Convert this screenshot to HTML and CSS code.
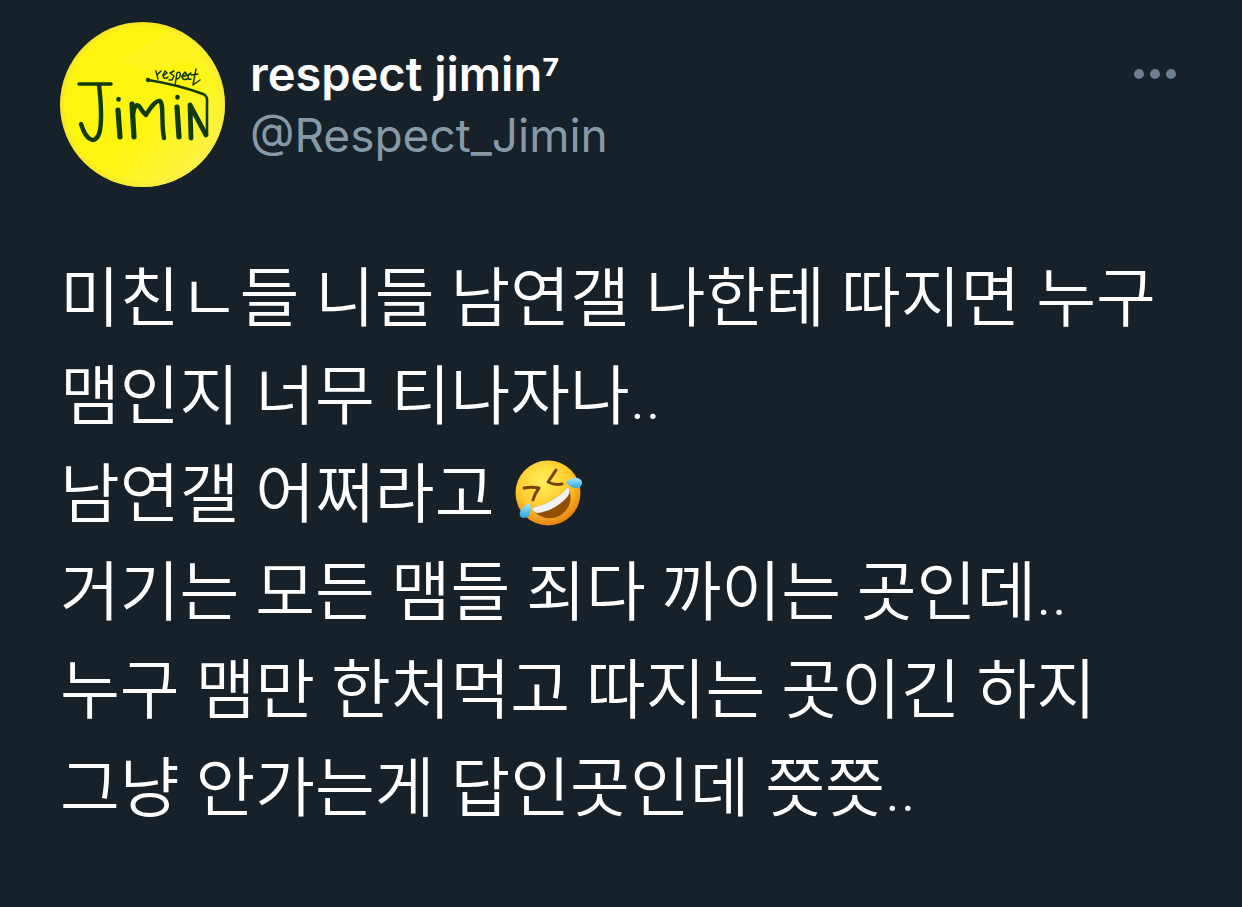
FILE: index.html
```html
<!DOCTYPE html>
<html lang="ko">
<head>
    <meta charset="UTF-8">
    <meta name="viewport" content="width=device-width, initial-scale=1.0">
    <title>respect jimin⁷</title>
    <link rel="stylesheet" href="styles.css">
</head>
<body>
    <article class="tweet">
        <header class="tweet-header">
            <svg class="avatar" viewBox="0 0 165 165" role="img" aria-label="respect jimin">
                <defs>
                    <clipPath id="avatarClip"><circle cx="82.5" cy="82.5" r="82.5"/></clipPath>
                    <radialGradient id="avatarFill" cx="50%" cy="50%" r="50%">
                        <stop offset="0.92" stop-color="#fef50f"/>
                        <stop offset="1" stop-color="#f3e52a"/>
                    </radialGradient>
                    <linearGradient id="avatarShade" x1="0" y1="0" x2="1" y2="1">
                        <stop offset="0.55" stop-color="#fbf250" stop-opacity="0"/>
                        <stop offset="0.85" stop-color="#fbf250" stop-opacity="0.8"/>
                    </linearGradient>
                </defs>
                <g clip-path="url(#avatarClip)">
                    <rect width="165" height="165" fill="url(#avatarFill)"/>
                    <rect width="165" height="165" fill="url(#avatarShade)"/>
                    <path d="M60 40L110 8L150 20L165 60L125 40L90 48Z" fill="#fbf250" opacity="0.25"/>
                </g>
                <g fill="none" stroke="#123b0c" stroke-linecap="round" stroke-linejoin="round">
                    <path d="M19 62L51 62" stroke-width="3.5"/>
                    <path d="M39 63C41 80 42 96 40 108C37 123 27 121 21 102" stroke-width="4.4"/>
                    <path d="M58 88L60 115" stroke-width="5.2"/>
                    <path d="M58.5 77V77.5" stroke-width="4.6"/>
                    <path d="M72 82L74 115" stroke-width="5.2"/>
                    <path d="M73 92C74 86 76 81 79 84C81 87 84 92 86 93C90 86 96 78 100 79C104 82 101 102 104 116" stroke-width="4.4"/>
                    <path d="M117 85L119 115" stroke-width="5.2"/>
                    <path d="M117.5 75V75.5" stroke-width="4.6"/>
                    <path d="M131 116L130 83L146 113" stroke-width="4.8"/>
                    <path d="M88 58C107 61 127 66 143 72C148 74 147 78 147 84L147 113" stroke-width="2.6"/>
                    <circle cx="88" cy="58" r="1.4" stroke-width="1.6"/>
                    <path d="M96 49L98 57M97 53L101 49M103 54L107 51L105 49L103 53C103 57 106 57 108 55M114 49L110 51L114 54L112 58L109 58M117 51L115 63M117 51C121 48 122 55 117 57M122 55L127 53L125 50L122 54C122 58 125 58 127 57M131 51C127 52 127 59 131 57M136 47L133 63L140 58M131 53L138 52" stroke-width="1.5"/>
                </g>
            </svg>
            <div class="author">
                <h1 class="name">respect jimin<span class="power">⁷</span></h1>
                <a class="handle" href="#">@Respect_Jimin</a>
            </div>
            <button class="more" type="button" aria-label="더 보기">
                <span class="dot"></span>
                <span class="dot"></span>
                <span class="dot"></span>
            </button>
        </header>

        <p class="tweet-text">
            미친ㄴ들 니들 남연갤 나한테 따지면 누구 맴인지 너무 티나자나..<br>
            남연갤 어쩌라고
            <svg class="emoji" viewBox="0 0 68 68" role="img" aria-label="🤣">
                <defs>
                    <radialGradient id="face" cx="42%" cy="32%" r="68%">
                        <stop offset="0" stop-color="#fff05a"/>
                        <stop offset="0.6" stop-color="#fdca2b"/>
                        <stop offset="1" stop-color="#e98414"/>
                    </radialGradient>
                    <linearGradient id="tear" x1="0" y1="0" x2="0" y2="1">
                        <stop offset="0" stop-color="#a6e8fc"/>
                        <stop offset="1" stop-color="#2ba5df"/>
                    </linearGradient>
                </defs>
                <circle cx="34" cy="34" r="32.5" fill="url(#face)"/>
                <path d="M18 49C33 45 46 38 54 28C60 40 55 52 45 57C34 62 23 58 18 49Z" fill="#925006"/>
                <path d="M18 49C33 45 46 38 54 28C56 31 56 34 54 37C46 47 34 53 23 54C20 53 19 51 18 49Z" fill="#f2f2f4"/>
                <path d="M10 29C15 28 20 28 25 29C22 33 20 37 19 41M42 11C39 16 36 20 34 23C38 25 43 26 48 25" fill="none" stroke="#79410a" stroke-width="3" stroke-linecap="round" stroke-linejoin="round"/>
                <path d="M52 23C57 18 66 17 68 23C69 30 58 32 52 23Z" fill="url(#tear)"/>
                <path d="M16 44C18 52 16 59 10 59C3 59 4 49 16 44Z" fill="url(#tear)"/>
            </svg><br>
            거기는 모든 맴들 죄다 까이는 곳인데..<br>
            누구 맴만 한처먹고 따지는 곳이긴 하지<br>
            그냥 안가는게 답인곳인데 쯧쯧..
        </p>
    </article>
</body>
</html>
```

FILE: styles.css
```css
body {
    margin: 0;
    background-color: #17212a;
    color: #fff;
    font-family: Inter, "Noto Sans CJK KR", sans-serif;
}
.tweet {
    padding: 22px 60px 60px;
}
.tweet-header {
    display: flex;
    align-items: flex-start;
    gap: 25px;
}
.avatar {
    width: 165px;
    height: 165px;
    flex-shrink: 0;
}
.author {
    flex: 1;
    padding-top: 22px;
}
.name {
    margin: 0;
    font-size: 47px;
    line-height: 60px;
    font-weight: 600;
}
.power {
    font-family: Roboto, sans-serif;
}
.handle {
    display: block;
    color: #8899a6;
    font-size: 46px;
    line-height: 60px;
    text-decoration: none;
}
.more {
    display: flex;
    gap: 6px;
    margin-top: 41px;
    padding: 6px;
    border: none;
    background: none;
    cursor: pointer;
}
.dot {
    width: 10px;
    height: 10px;
    border-radius: 50%;
    background-color: #6e7f8f;
}
.tweet-text {
    margin: 63px 0 0;
    font-family: Roboto, "Noto Sans CJK KR", sans-serif;
    font-size: 65px;
    line-height: 98px;
    font-weight: 350;
    word-break: keep-all;
}
.emoji {
    width: 68px;
    height: 68px;
    margin-left: 4px;
    vertical-align: -10px;
}
```
